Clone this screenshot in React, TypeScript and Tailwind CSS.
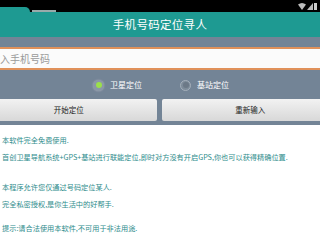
import React from "react";

const font = { fontFamily: '"Noto Sans CJK SC", "Noto Sans", sans-serif' };

export default function App() {
  return (
    <div className="w-[320px] h-[240px] overflow-hidden bg-white relative" style={font}>
      {/* status bar */}
      <div className="h-[12px] bg-black relative">
        <div className="absolute left-0 top-[7px] w-[30px] h-[5px] bg-[#1e9a92] rounded-tr-full" />
        <div className="absolute left-[32px] top-[10px] w-[24px] h-[2px] bg-[#9aa]" />
        <div className="absolute right-[3px] top-[3px] flex items-end gap-[1px]">
          <svg width="8" height="7" viewBox="0 0 8 7">
            <path d="M0 1.5 Q4 -1.5 8 1.5 L4 7 Z" fill="#bbb" />
          </svg>
          <svg width="6" height="7" viewBox="0 0 6 7">
            <path d="M6 0 L6 7 L0 7 Z" fill="#bbb" />
          </svg>
          <div className="w-[3px] h-[7px] bg-[#ccc]" />
        </div>
      </div>
      {/* header */}
      <div className="h-[25px] bg-[#1e9a92] flex items-center justify-center">
        <span className="text-white text-[11.5px] tracking-[0.3px]">手机号码定位寻人</span>
      </div>
      {/* gray band */}
      <div className="bg-[#738496] h-[88px] pt-[10px]">
        <div className="mx-[-20px] h-[23px] border-y-2 border-[#e0915a] bg-[#fbfbfb] flex items-center pl-[10px]">
          <span className="text-[10px] text-[#999]">输入手机号码</span>
        </div>
        <div className="h-[29px] flex items-center pl-[93px] pt-[1px]">
          <div className="w-[11px] h-[11px] rounded-full bg-[#8a98a6] flex items-center justify-center shadow-[0_0_2px_#aab]">
            <div className="w-[6px] h-[6px] rounded-full bg-[#9be04a]" />
          </div>
          <span className="ml-[6px] text-[8px] text-white">卫星定位</span>
          <div className="ml-[38px] w-[11px] h-[11px] rounded-full bg-[#7d8b99] border border-[#a5b0bb] flex items-center justify-center">
            <div className="w-[6px] h-[6px] rounded-full bg-[#6c7987]" />
          </div>
          <span className="ml-[6px] text-[8px] text-white">基站定位</span>
        </div>
        <div className="flex mx-[-19px] gap-[5px]">
          <div className="w-[176px] h-[22px] rounded-[2px] bg-gradient-to-b from-[#f2f2f2] to-[#d8d8d8] flex items-center justify-center">
            <span className="text-[7.5px] text-[#222]">开始定位</span>
          </div>
          <div className="w-[178px] h-[22px] rounded-[2px] bg-gradient-to-b from-[#f2f2f2] to-[#d8d8d8] flex items-center justify-center">
            <span className="text-[7.5px] text-[#222]">重新输入</span>
          </div>
        </div>
      </div>
      {/* content */}
      <div className="pl-[2px] pt-[10px] text-[7.2px] text-[#2e8c8c] leading-[10px]">
        <div>本软件完全免费使用.</div>
        <div className="mt-[7px]">首创卫星导航系统+GPS+基站进行联能定位,即时对方没有开启GPS,你也可以获得精确位置.</div>
        <div className="mt-[20px]">本程序允许您仅通过号码定位某人.</div>
        <div className="mt-[7px]">完全私密授权,是你生活中的好帮手.</div>
        <div className="mt-[14px]">提示:请合法使用本软件,不可用于非法用途.</div>
      </div>
    </div>
  );
}
